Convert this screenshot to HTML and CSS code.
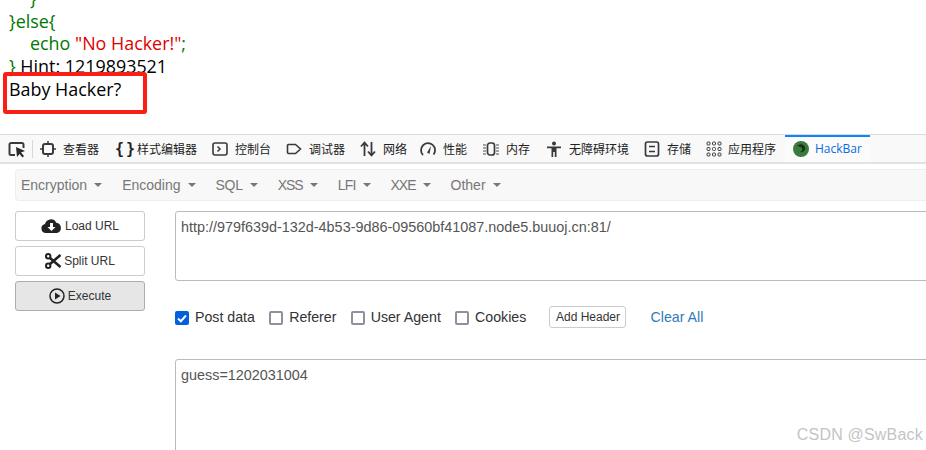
FILE: index.html
```html
<!DOCTYPE html>
<html lang="zh">
<head>
<meta charset="utf-8">
<title>HackBar</title>
<link rel="stylesheet" href="styles.css">
</head>
<body>
<div class="page">
  <section class="output">
    <div class="code green indent-top">}</div>
    <div class="code green">}else{</div>
    <div class="code green indent">echo <span class="red">"No Hacker!"</span><span class="green">;</span></div>
    <div class="code"><span class="green">}</span> Hint: 1219893521</div>
    <div class="code">Baby Hacker?</div>
    <div class="highlight"></div>
  </section>

  <nav class="devtools">
    <span class="picker">
      <svg width="18" height="18" viewBox="0 0 18 18"><path d="M7 15H3a1.500 1.500 0 0 1-1.500-1.500v-9A1.500 1.500 0 0 1 3 3h11a1.500 1.500 0 0 1 1.500 1.500V8" fill="none" stroke="#3a3a3e" stroke-width="2"/><path d="M8 7l9 4-4 1.500 3 3.500-1.500 1.500-3-3.500L9 17z" fill="#2a2a2e"/></svg>
    </span>
    <span class="sep"></span>
    <span class="tab t1"><svg width="16" height="16" viewBox="0 0 16 16"><rect x="3" y="3" width="10" height="10" rx="2" fill="none" stroke="#3a3a3e" stroke-width="2"/><path d="M8 0v3M8 13v3M0 8h3M13 8h3" stroke="#3a3a3e" stroke-width="1.500"/></svg>查看器</span>
    <span class="tab t2"><b class="braces">{ }</b>样式编辑器</span>
    <span class="tab t3"><svg width="16" height="16" viewBox="0 0 16 16"><rect x="1" y="2" width="14" height="12" rx="2" fill="none" stroke="#3a3a3e" stroke-width="1.600"/><path d="M5.500 5.500L8 8l-2.500 2.500" fill="none" stroke="#3a3a3e" stroke-width="1.500"/></svg>控制台</span>
    <span class="tab t4"><svg width="16" height="16" viewBox="0 0 16 16"><path d="M2.500 3.500h7L14.500 8l-5 4.500h-7a1 1 0 0 1-1-1v-7a1 1 0 0 1 1-1z" fill="none" stroke="#3a3a3e" stroke-width="1.600"/></svg>调试器</span>
    <span class="tab t5"><svg width="16" height="16" viewBox="0 0 16 16"><path d="M4.500 15V2M1 5.500l3.500-4 3.500 4M11.500 1v13M8 10.500l3.500 4 3.500-4" fill="none" stroke="#3a3a3e" stroke-width="1.800"/></svg>网络</span>
    <span class="tab t6"><svg width="16" height="16" viewBox="0 0 16 16"><path d="M3 14A7 7 0 1 1 13.500 13.500" fill="none" stroke="#3a3a3e" stroke-width="1.800"/><path d="M7 11.500L11 5l-1.500 8z" fill="#3a3a3e"/></svg>性能</span>
    <span class="tab t7"><svg width="16" height="16" viewBox="0 0 16 16"><rect x="4.500" y="2" width="7" height="12" rx="2.500" fill="none" stroke="#3a3a3e" stroke-width="1.700"/><path d="M0 4h3M0 7h3M0 10h3M0 13h3M13 4h3M13 7h3M13 10h3M13 13h3" stroke="#3a3a3e" stroke-width=".9"/></svg>内存</span>
    <span class="tab t8"><svg width="16" height="16" viewBox="0 0 16 16"><circle cx="8" cy="2.500" r="2" fill="#3a3a3e"/><path d="M1 5.500h14v1.800h-4.500V16H8.800v-5H7.200v5H5.500V7.300H1z" fill="#3a3a3e"/></svg>无障碍环境</span>
    <span class="tab t9"><svg width="16" height="16" viewBox="0 0 16 16"><rect x="1.500" y="1" width="13" height="14" rx="2" fill="none" stroke="#3a3a3e" stroke-width="1.700"/><path d="M5 5.500h6M5 10.500h6" stroke="#3a3a3e" stroke-width="1.300"/></svg>存储</span>
    <span class="tab t10"><svg width="16" height="16" viewBox="0 0 16 16" fill="none" stroke="#3a3a3e" stroke-width="1"><rect x="1" y="1" width="3" height="3" rx="1"/><rect x="6.500" y="1" width="3" height="3" rx="1"/><rect x="12" y="1" width="3" height="3" rx="1"/><rect x="1" y="6.500" width="3" height="3" rx="1"/><rect x="6.500" y="6.500" width="3" height="3" rx="1"/><rect x="12" y="6.500" width="3" height="3" rx="1"/><rect x="1" y="12" width="3" height="3" rx="1"/><rect x="6.500" y="12" width="3" height="3" rx="1"/><rect x="12" y="12" width="3" height="3" rx="1"/></svg>应用程序</span>
    <span class="tab hackbar"><svg width="16" height="16" viewBox="0 0 16 16"><circle cx="8" cy="8" r="8" fill="#3a7a3d"/><path d="M4 5c3-3 7-2 8 1 1 3-2 6-5 5 2-1 3-2 2-4-1-1-3-2-5-2z" fill="#16301a"/></svg>HackBar</span>
  </nav>

  <section class="hackbar-panel">
    <div class="menu">
      <span class="menu-item">Encryption<i class="caret"></i></span>
      <span class="menu-item">Encoding<i class="caret"></i></span>
      <span class="menu-item tight-s">SQL<i class="caret"></i></span>
      <span class="menu-item tight-l">XSS<i class="caret"></i></span>
      <span class="menu-item tight-m">LFI<i class="caret"></i></span>
      <span class="menu-item tight-l">XXE<i class="caret"></i></span>
      <span class="menu-item">Other<i class="caret"></i></span>
    </div>
    <div class="workspace">
      <div class="actions">
        <button class="btn"><svg width="21" height="16" viewBox="0 0 21 16"><path d="M5 15a4.500 4.500 0 0 1-1-8.900A6 6 0 0 1 15.300 4.800 5.200 5.200 0 0 1 16 15z" fill="#222"/><path d="M9 5h3v4h2.500l-4 4-4-4H9z" fill="#fff"/></svg>Load URL</button>
        <button class="btn"><svg width="16" height="16" viewBox="0 0 16 16"><circle cx="3.200" cy="3.200" r="2.200" fill="none" stroke="#222" stroke-width="2"/><circle cx="3.200" cy="12.800" r="2.200" fill="none" stroke="#222" stroke-width="2"/><path d="M5 5l10.500 9M5 11L15.500 2" stroke="#222" stroke-width="2.600"/></svg>Split URL</button>
        <button class="btn active"><svg width="16" height="16" viewBox="0 0 16 16"><circle cx="8" cy="8" r="7" fill="none" stroke="#222" stroke-width="1.500"/><path d="M6 4.500l5.500 3.500L6 11.500z" fill="#222"/></svg>Execute</button>
      </div>
      <div class="fields">
        <div class="field url">http://979f639d-132d-4b53-9d86-09560bf41087.node5.buuoj.cn:81/</div>
        <div class="options">
          <label class="opt"><span class="box checked"><svg width="14" height="14" viewBox="0 0 14 14"><path d="M3 7.500l2.800 2.700L11 4.500" fill="none" stroke="#fff" stroke-width="2"/></svg></span>Post data</label>
          <label class="opt"><span class="box"></span>Referer</label>
          <label class="opt"><span class="box"></span>User Agent</label>
          <label class="opt"><span class="box"></span>Cookies</label>
          <button class="add-header">Add Header</button>
          <a class="clear">Clear All</a>
        </div>
        <div class="field post">guess=1202031004</div>
      </div>
    </div>
  </section>
  <div class="watermark">CSDN @SwBack</div>
</div>
</body>
</html>
```

FILE: styles.css
```css
* { box-sizing: border-box; }
html, body { margin: 0; padding: 0; background: #fff; overflow: hidden; }
.page { position: relative; width: 926px; height: 450px; overflow: hidden; font-family: "Liberation Sans", Arial, sans-serif; }

.output { position: relative; display: flow-root; height: 134px; padding-left: 9px; font-family: "Open Sans", "Noto Sans", sans-serif; font-size: 17.900px; color: #000; }
.code { height: 22.700px; line-height: 22.700px; white-space: pre; }
.indent-top { margin-top: -13px; padding-left: 21px; }
.indent { padding-left: 21px; }
.green { color: #007700; }
.red { color: #dd0000; }
.highlight { position: absolute; left: 3px; top: 72px; width: 144px; height: 42px; border: 4px solid #fa1e14; border-radius: 3px; }

.devtools { display: flex; align-items: center; height: 30px; background: #f9f9fa; border-top: 1px solid #dcdcdc; border-bottom: 2px solid #e2e2e2; font-family: "Noto Sans CJK SC", sans-serif; font-size: 12px; color: #222; }
.picker { display: flex; margin-left: 8px; }
.sep { width: 1px; height: 18px; margin: 0 7px 0 6px; background: #d8d8d8; }
.tab { display: flex; align-items: center; gap: 7px; height: 100%; white-space: nowrap; }
.t1 { width: 74px; }
.t2 { width: 98px; gap: 4px; }
.t3 { width: 74px; }
.t4 { width: 74px; }
.t5 { width: 60px; }
.t6 { width: 63px; }
.t7 { width: 63px; }
.t8 { width: 98px; }
.t9 { width: 62px; }
.t10 { width: 79px; gap: 6px; }
.braces { padding-left: 1px; font: 700 15px "DejaVu Sans Mono", monospace; letter-spacing: -3.500px; width: 19px; white-space: pre; }
.hackbar { width: 85px; padding-left: 8px; gap: 6px; color: #0a6cdc; font-family: "Open Sans", sans-serif; font-size: 12px; box-shadow: inset 0 2px 0 #0a84ff; background: #fbfbfb; }

.hackbar-panel { padding: 5px 0 0 15px; }
.menu { display: flex; align-items: center; gap: 20px; width: 911px; height: 32px; padding-left: 5px; background: #f8f8f8; border: 1px solid #eeeeee; border-right: 0; border-radius: 4px 0 0 4px; font-size: 14px; color: #777; }
.menu-item { display: flex; align-items: center; }
.tight-s { letter-spacing: -.3px; }
.tight-m { letter-spacing: -.8px; }
.tight-l { letter-spacing: -1px; }
.caret { width: 0; height: 0; margin-left: 7px; border-left: 4px solid transparent; border-right: 4px solid transparent; border-top: 4px solid #777; }

.workspace { display: flex; margin-top: 10px; }
.actions { display: flex; flex-direction: column; gap: 5px; width: 130px; }
.btn { display: flex; align-items: center; justify-content: center; gap: 3px; height: 30px; padding: 0; background: #fff; border: 1px solid #cccccc; border-radius: 3px; font: 12px "Liberation Sans", sans-serif; color: #333; }
.btn.active { background: #e6e6e6; border-color: #adadad; }
.fields { flex: 1; min-width: 0; margin-left: 30px; }
.field { width: 760px; border: 1px solid #bbbbbb; border-radius: 3px; padding: 7px 5px; font-size: 14.400px; line-height: 17px; color: #555; }
.url { height: 70px; }
.post { height: 100px; margin-top: 27px; }
.options { display: flex; align-items: center; height: 51px; padding-top: 20px; font-size: 14.200px; color: #333; }
.opt { display: flex; align-items: center; gap: 6px; margin-right: 14.200px; }
.box { display: flex; width: 14px; height: 14px; margin-top: 2px; border: 2px solid #8f8f9d; border-radius: 2px; background: #fff; }
.box.checked { background: #0060df; border: 0; }
.add-header { height: 22px; width: 77px; margin-left: 9px; padding: 0; background: #fff; border: 1px solid #cccccc; border-radius: 3px; font: 12px "Liberation Sans", sans-serif; color: #333; }
.clear { margin-left: 24px; color: #337ab7; }

.watermark { position: absolute; right: 3px; top: 426px; font: 16px "Liberation Sans", sans-serif; color: #c4c4c4; letter-spacing: .2px; }
```
